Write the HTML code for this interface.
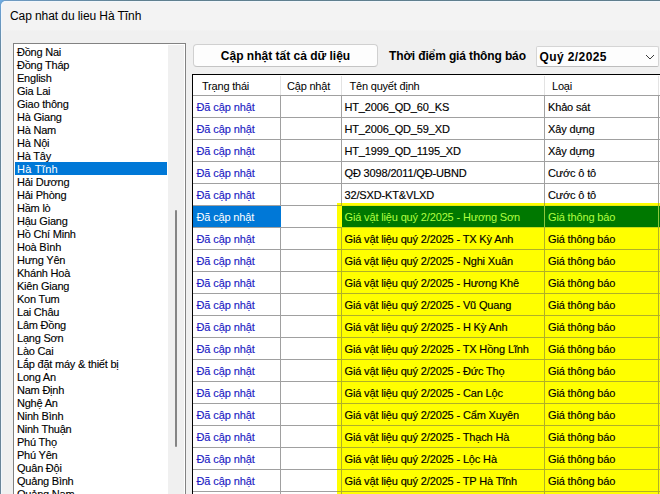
<!DOCTYPE html>
<html><head><meta charset="utf-8">
<style>
html,body{margin:0;padding:0;}
body{width:660px;height:494px;overflow:hidden;position:relative;background:radial-gradient(circle at 0 0,#6eb2ee 0px,#6c9cc6 5px,#66889d 12px);font-family:"Liberation Sans",sans-serif;}
i{position:absolute;display:block;}
.edge-top{position:absolute;left:5px;top:0;width:655px;height:1px;background:linear-gradient(90deg,#6f9cc4,#60808f 20%,#5f7d8c);}
.edge-left{position:absolute;left:0;top:5px;width:1px;height:489px;background:linear-gradient(180deg,#6aa2d6,#68869a 10%,#6a8599);}
.win{position:absolute;left:1px;top:1px;width:720px;height:560px;background:linear-gradient(180deg,#f3f3f3 0px,#f3f3f3 29px,#f0f0f0 30px);border-top-left-radius:5px;box-shadow:inset 1px 1px 0 #f1f7fd;}
.title{position:absolute;left:10px;top:9px;font-size:12px;letter-spacing:-0.08px;color:#000;white-space:nowrap;}
.lb{position:absolute;left:13px;top:43px;width:171px;height:470px;border:1px solid #828282;background:#fff;}
.sb{position:absolute;left:168px;top:45px;width:16px;height:460px;background:#f0f0f0;}
.thumb{position:absolute;left:175px;top:210px;width:2px;height:237px;background:#858585;border-radius:1px;}
.li{position:absolute;left:15px;width:152px;height:13px;line-height:13px;font-size:11px;letter-spacing:-0.22px;color:#000;white-space:nowrap;-webkit-text-stroke:0.12px currentColor;}
.li span{position:relative;top:1px;left:2px;}
.li.sel{background:#0078d7;color:#fff;-webkit-text-stroke:0;letter-spacing:0.3px;}
.btn{position:absolute;left:193px;top:44px;width:183px;height:21px;border:1px solid #d0d0d0;border-bottom-color:#c4c4c4;border-radius:4px;background:#fdfdfd;}
.btnt{position:absolute;left:193px;top:45px;width:185px;height:22px;line-height:22px;text-align:center;font-size:12px;font-weight:bold;color:#000;white-space:nowrap;}
.lbl{position:absolute;left:389px;top:45px;height:22px;line-height:22px;font-size:12px;font-weight:bold;letter-spacing:-0.13px;white-space:nowrap;}
.cb{position:absolute;left:536px;top:46px;width:121px;height:19px;border:1px solid #d5d5d5;border-bottom-color:#bdbdbd;border-radius:2px;background:#fdfdfd;}
.cbt{position:absolute;left:539.5px;top:47px;height:20px;line-height:20px;font-size:12px;font-weight:bold;letter-spacing:0.4px;white-space:nowrap;}
.tx{position:absolute;height:21px;line-height:23px;font-size:11px;letter-spacing:-0.15px;white-space:nowrap;-webkit-text-stroke:0.15px currentColor;}
.bl{color:#1c1cc4;letter-spacing:-0.1px;} .bk{color:#000;} .wt{color:#fff;-webkit-text-stroke:0;} .gy{color:#b0ff40;-webkit-text-stroke:0;}
.hd{position:absolute;top:75px;height:20px;line-height:22px;font-size:11px;letter-spacing:-0.2px;white-space:nowrap;color:#000;}
</style></head><body>
<div class="edge-top"></div><div class="edge-left"></div>
<div class="win"></div>
<div class="title">Cap nhat du lieu Hà Tĩnh</div>
<div class="lb"></div>
<div class="sb"></div>
<div class="thumb"></div>
<div class="li" style="top:45px"><span>Đồng Nai</span></div>
<div class="li" style="top:58px"><span>Đồng Tháp</span></div>
<div class="li" style="top:71px"><span>English</span></div>
<div class="li" style="top:84px"><span>Gia Lai</span></div>
<div class="li" style="top:97px"><span>Giao thông</span></div>
<div class="li" style="top:110px"><span>Hà Giang</span></div>
<div class="li" style="top:123px"><span>Hà Nam</span></div>
<div class="li" style="top:136px"><span>Hà Nội</span></div>
<div class="li" style="top:149px"><span>Hà Tây</span></div>
<div class="li sel" style="top:162px"><span>Hà Tĩnh</span></div>
<div class="li" style="top:175px"><span>Hải Dương</span></div>
<div class="li" style="top:188px"><span>Hải Phòng</span></div>
<div class="li" style="top:201px"><span>Hầm lò</span></div>
<div class="li" style="top:214px"><span>Hậu Giang</span></div>
<div class="li" style="top:227px"><span>Hồ Chí Minh</span></div>
<div class="li" style="top:240px"><span>Hoà Bình</span></div>
<div class="li" style="top:253px"><span>Hưng Yên</span></div>
<div class="li" style="top:266px"><span>Khánh Hoà</span></div>
<div class="li" style="top:279px"><span>Kiên Giang</span></div>
<div class="li" style="top:292px"><span>Kon Tum</span></div>
<div class="li" style="top:305px"><span>Lai Châu</span></div>
<div class="li" style="top:318px"><span>Lâm Đồng</span></div>
<div class="li" style="top:331px"><span>Lạng Sơn</span></div>
<div class="li" style="top:344px"><span>Lào Cai</span></div>
<div class="li" style="top:357px"><span>Lắp đặt máy &amp; thiết bị</span></div>
<div class="li" style="top:370px"><span>Long An</span></div>
<div class="li" style="top:383px"><span>Nam Định</span></div>
<div class="li" style="top:396px"><span>Nghệ An</span></div>
<div class="li" style="top:409px"><span>Ninh Bình</span></div>
<div class="li" style="top:422px"><span>Ninh Thuận</span></div>
<div class="li" style="top:435px"><span>Phú Thọ</span></div>
<div class="li" style="top:448px"><span>Phú Yên</span></div>
<div class="li" style="top:461px"><span>Quân Đội</span></div>
<div class="li" style="top:474px"><span>Quảng Bình</span></div>
<div class="li" style="top:487px"><span>Quảng Nam</span></div>
<div class="btn"></div>
<div class="btnt">Cập nhật tất cả dữ liệu</div>
<div class="lbl">Thời điểm giá thông báo</div>
<div class="cb"></div>
<div class="cbt">Quý 2/2025</div>
<svg style="position:absolute;left:644px;top:53px" width="12" height="8" viewBox="0 0 12 8"><path d="M2 2 L6 6 L10 2" fill="none" stroke="#3c3c3c" stroke-width="1"/></svg>
<i style="left:193px;top:75px;width:480px;height:430px;background:#fff;"></i>
<i style="left:192px;top:74px;width:480px;height:1px;background:#000;"></i>
<i style="left:192px;top:74px;width:1px;height:430px;background:#000;"></i>
<i style="left:280px;top:76px;width:1px;height:19px;background:#e3e3e3;"></i>
<i style="left:341px;top:76px;width:1px;height:19px;background:#e3e3e3;"></i>
<i style="left:544px;top:76px;width:1px;height:19px;background:#e3e3e3;"></i>
<i style="left:658px;top:76px;width:1px;height:19px;background:#e3e3e3;"></i>
<i style="left:193px;top:95px;width:480px;height:1px;background:#a0a0a0;"></i>
<i style="left:337px;top:203px;width:330px;height:300px;background:#ffff00;"></i>
<i style="left:193px;top:206px;width:88px;height:21px;background:#0078d7;"></i>
<i style="left:342px;top:206px;width:330px;height:21px;background:#007800;"></i>
<i style="left:193px;top:117px;width:480px;height:1px;background:#a0a0a0;"></i>
<i style="left:193px;top:139px;width:480px;height:1px;background:#a0a0a0;"></i>
<i style="left:193px;top:161px;width:480px;height:1px;background:#a0a0a0;"></i>
<i style="left:193px;top:183px;width:480px;height:1px;background:#a0a0a0;"></i>
<i style="left:193px;top:205px;width:144px;height:1px;background:#a0a0a0;"></i>
<i style="left:337px;top:205px;width:5px;height:1px;background:#b0b028;"></i>
<i style="left:342px;top:205px;width:330px;height:1px;background:#e8e810;"></i>
<i style="left:281px;top:227px;width:56px;height:1px;background:#a0a0a0;"></i>
<i style="left:193px;top:227px;width:88px;height:1px;background:#a0a0a0;"></i>
<i style="left:337px;top:227px;width:5px;height:1px;background:#b0b028;"></i>
<i style="left:342px;top:227px;width:330px;height:1px;background:#c8d818;"></i>
<i style="left:193px;top:249px;width:144px;height:1px;background:#a0a0a0;"></i>
<i style="left:337px;top:249px;width:330px;height:1px;background:#b0b028;"></i>
<i style="left:193px;top:271px;width:144px;height:1px;background:#a0a0a0;"></i>
<i style="left:337px;top:271px;width:330px;height:1px;background:#b0b028;"></i>
<i style="left:193px;top:293px;width:144px;height:1px;background:#a0a0a0;"></i>
<i style="left:337px;top:293px;width:330px;height:1px;background:#b0b028;"></i>
<i style="left:193px;top:315px;width:144px;height:1px;background:#a0a0a0;"></i>
<i style="left:337px;top:315px;width:330px;height:1px;background:#b0b028;"></i>
<i style="left:193px;top:337px;width:144px;height:1px;background:#a0a0a0;"></i>
<i style="left:337px;top:337px;width:330px;height:1px;background:#b0b028;"></i>
<i style="left:193px;top:359px;width:144px;height:1px;background:#a0a0a0;"></i>
<i style="left:337px;top:359px;width:330px;height:1px;background:#b0b028;"></i>
<i style="left:193px;top:381px;width:144px;height:1px;background:#a0a0a0;"></i>
<i style="left:337px;top:381px;width:330px;height:1px;background:#b0b028;"></i>
<i style="left:193px;top:403px;width:144px;height:1px;background:#a0a0a0;"></i>
<i style="left:337px;top:403px;width:330px;height:1px;background:#b0b028;"></i>
<i style="left:193px;top:425px;width:144px;height:1px;background:#a0a0a0;"></i>
<i style="left:337px;top:425px;width:330px;height:1px;background:#b0b028;"></i>
<i style="left:193px;top:447px;width:144px;height:1px;background:#a0a0a0;"></i>
<i style="left:337px;top:447px;width:330px;height:1px;background:#b0b028;"></i>
<i style="left:193px;top:469px;width:144px;height:1px;background:#a0a0a0;"></i>
<i style="left:337px;top:469px;width:330px;height:1px;background:#b0b028;"></i>
<i style="left:193px;top:491px;width:144px;height:1px;background:#a0a0a0;"></i>
<i style="left:337px;top:491px;width:330px;height:1px;background:#b0b028;"></i>
<i style="left:280px;top:96px;width:1px;height:109px;background:#a0a0a0;"></i>
<i style="left:280px;top:227px;width:1px;height:300px;background:#a0a0a0;"></i>
<i style="left:341px;top:96px;width:1px;height:107px;background:#a0a0a0;"></i>
<i style="left:341px;top:203px;width:1px;height:3px;background:#b0b028;"></i>
<i style="left:341px;top:227px;width:1px;height:300px;background:#b0b028;"></i>
<i style="left:544px;top:96px;width:1px;height:107px;background:#a0a0a0;"></i>
<i style="left:544px;top:203px;width:1px;height:3px;background:#b0b028;"></i>
<i style="left:544px;top:206px;width:1px;height:21px;background:#8cc83c;"></i>
<i style="left:544px;top:227px;width:1px;height:300px;background:#b0b028;"></i>
<i style="left:658px;top:96px;width:1px;height:107px;background:#a0a0a0;"></i>
<i style="left:658px;top:203px;width:1px;height:3px;background:#b0b028;"></i>
<i style="left:658px;top:206px;width:1px;height:21px;background:#8cc83c;"></i>
<i style="left:658px;top:227px;width:1px;height:300px;background:#b0b028;"></i>
<div class="tx bl" style="left:196.5px;top:96px">Đã cập nhật</div>
<div class="tx bk" style="left:344.5px;top:96px">HT_2006_QD_60_KS</div>
<div class="tx bk" style="left:548px;top:96px">Khảo sát</div>
<div class="tx bl" style="left:196.5px;top:118px">Đã cập nhật</div>
<div class="tx bk" style="left:344.5px;top:118px">HT_2006_QD_59_XD</div>
<div class="tx bk" style="left:548px;top:118px">Xây dựng</div>
<div class="tx bl" style="left:196.5px;top:140px">Đã cập nhật</div>
<div class="tx bk" style="left:344.5px;top:140px">HT_1999_QD_1195_XD</div>
<div class="tx bk" style="left:548px;top:140px">Xây dựng</div>
<div class="tx bl" style="left:196.5px;top:162px">Đã cập nhật</div>
<div class="tx bk" style="left:344.5px;top:162px">QĐ 3098/2011/QĐ-UBND</div>
<div class="tx bk" style="left:548px;top:162px">Cước ô tô</div>
<div class="tx bl" style="left:196.5px;top:184px">Đã cập nhật</div>
<div class="tx bk" style="left:344.5px;top:184px">32/SXD-KT&amp;VLXD</div>
<div class="tx bk" style="left:548px;top:184px">Cước ô tô</div>
<div class="tx wt" style="left:196.5px;top:206px">Đã cập nhật</div>
<div class="tx gy" style="left:344.5px;top:206px">Giá vật liệu quý 2/2025 - Hương Sơn</div>
<div class="tx gy" style="left:548px;top:206px">Giá thông báo</div>
<div class="tx bl" style="left:196.5px;top:228px">Đã cập nhật</div>
<div class="tx bk" style="left:344.5px;top:228px">Giá vật liệu quý 2/2025 - TX Kỳ Anh</div>
<div class="tx bk" style="left:548px;top:228px">Giá thông báo</div>
<div class="tx bl" style="left:196.5px;top:250px">Đã cập nhật</div>
<div class="tx bk" style="left:344.5px;top:250px">Giá vật liệu quý 2/2025 - Nghi Xuân</div>
<div class="tx bk" style="left:548px;top:250px">Giá thông báo</div>
<div class="tx bl" style="left:196.5px;top:272px">Đã cập nhật</div>
<div class="tx bk" style="left:344.5px;top:272px">Giá vật liệu quý 2/2025 - Hương Khê</div>
<div class="tx bk" style="left:548px;top:272px">Giá thông báo</div>
<div class="tx bl" style="left:196.5px;top:294px">Đã cập nhật</div>
<div class="tx bk" style="left:344.5px;top:294px">Giá vật liệu quý 2/2025 - Vũ Quang</div>
<div class="tx bk" style="left:548px;top:294px">Giá thông báo</div>
<div class="tx bl" style="left:196.5px;top:316px">Đã cập nhật</div>
<div class="tx bk" style="left:344.5px;top:316px">Giá vật liệu quý 2/2025 - H Kỳ Anh</div>
<div class="tx bk" style="left:548px;top:316px">Giá thông báo</div>
<div class="tx bl" style="left:196.5px;top:338px">Đã cập nhật</div>
<div class="tx bk" style="left:344.5px;top:338px">Giá vật liệu quý 2/2025 - TX Hồng Lĩnh</div>
<div class="tx bk" style="left:548px;top:338px">Giá thông báo</div>
<div class="tx bl" style="left:196.5px;top:360px">Đã cập nhật</div>
<div class="tx bk" style="left:344.5px;top:360px">Giá vật liệu quý 2/2025 - Đức Thọ</div>
<div class="tx bk" style="left:548px;top:360px">Giá thông báo</div>
<div class="tx bl" style="left:196.5px;top:382px">Đã cập nhật</div>
<div class="tx bk" style="left:344.5px;top:382px">Giá vật liệu quý 2/2025 - Can Lộc</div>
<div class="tx bk" style="left:548px;top:382px">Giá thông báo</div>
<div class="tx bl" style="left:196.5px;top:404px">Đã cập nhật</div>
<div class="tx bk" style="left:344.5px;top:404px">Giá vật liệu quý 2/2025 - Cẩm Xuyên</div>
<div class="tx bk" style="left:548px;top:404px">Giá thông báo</div>
<div class="tx bl" style="left:196.5px;top:426px">Đã cập nhật</div>
<div class="tx bk" style="left:344.5px;top:426px">Giá vật liệu quý 2/2025 - Thạch Hà</div>
<div class="tx bk" style="left:548px;top:426px">Giá thông báo</div>
<div class="tx bl" style="left:196.5px;top:448px">Đã cập nhật</div>
<div class="tx bk" style="left:344.5px;top:448px">Giá vật liệu quý 2/2025 - Lộc Hà</div>
<div class="tx bk" style="left:548px;top:448px">Giá thông báo</div>
<div class="tx bl" style="left:196.5px;top:470px">Đã cập nhật</div>
<div class="tx bk" style="left:344.5px;top:470px">Giá vật liệu quý 2/2025 - TP Hà Tĩnh</div>
<div class="tx bk" style="left:548px;top:470px">Giá thông báo</div>
<div class="hd" style="left:202px">Trạng thái</div>
<div class="hd" style="left:287px">Cập nhật</div>
<div class="hd" style="left:349.5px">Tên quyết định</div>
<div class="hd" style="left:552px">Loại</div>
</body></html>
